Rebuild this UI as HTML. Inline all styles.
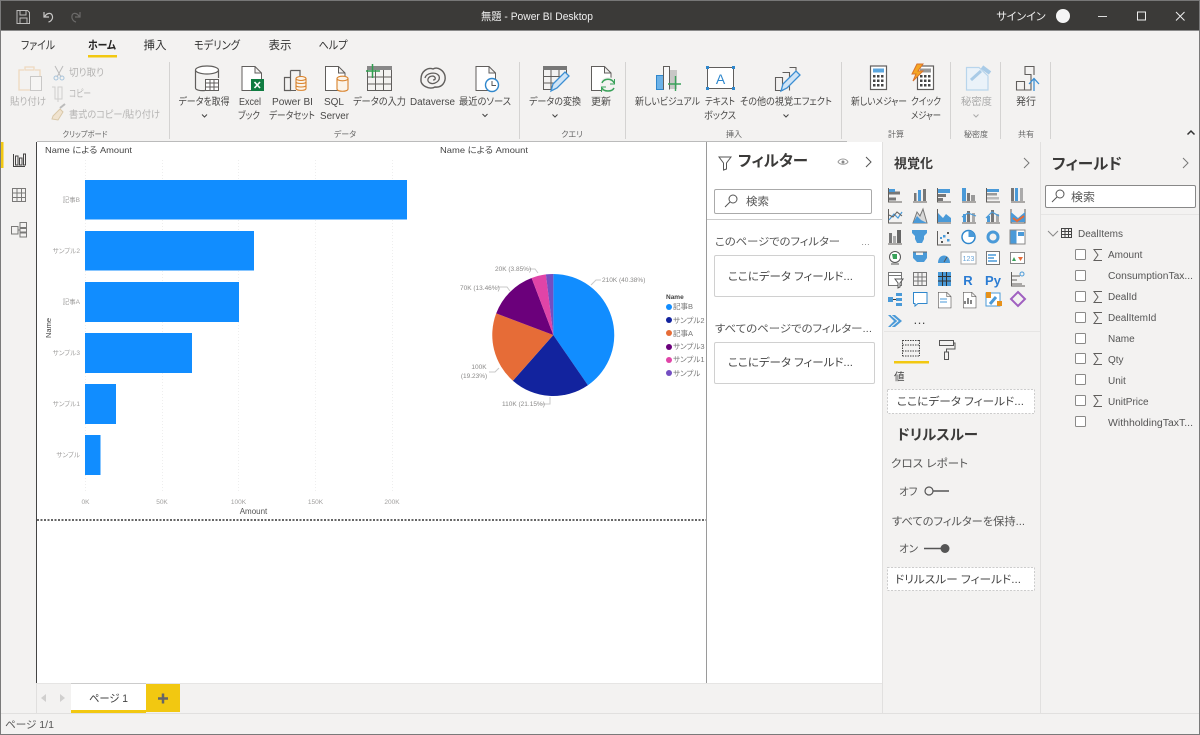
<!DOCTYPE html>
<html lang="ja"><head><meta charset="utf-8"><title>無題 - Power BI Desktop</title>
<style>
html,body{margin:0;padding:0;width:1200px;height:735px;overflow:hidden;background:#f3f2f1}
svg{position:absolute;left:0;top:0;filter:blur(.3px)}
text{font-family:"Liberation Sans","Noto Sans CJK JP",sans-serif;font-feature-settings:"palt";fill:#4a4948;font-size:10px}
.m{text-anchor:middle}
.tab{font-size:11.5px;fill:#333}
.d{fill:#b5b4b3}
.g{font-size:8px;fill:#666}
.ln{fill:none;stroke:#605e5c;stroke-width:1}
.b{fill:#4a9ad8}
.bl{fill:none;stroke:#4a9ad8;stroke-width:1.2}
.a{font-size:6.5px;fill:#a09f9e}
.p{font-size:6px;fill:#8a8988}
.f{font-size:10px;fill:#555}
.h{font-size:15.5px;font-weight:bold;fill:#3b3a39}
</style></head><body>
<svg width="1200" height="735" viewBox="0 0 1200 735">
<defs>
<g id="doc"><path class="ln" d="M0.5 .5H13.500L20 7V24.500H.5Z M13.500 .5V7H20" style="fill:#fff"/></g>
<g id="cb"><rect x=".5" y=".5" width="10" height="10" rx="1" fill="#fff" stroke="#8a8988"/></g>
<g id="sig"><path d="M9 .5H1L5 6 1 11.500H9" fill="none" stroke="#605e5c"/></g>
</defs>

<!-- window -->
<rect x="0" y="0" width="1200" height="735" fill="#f3f2f1"/>
<rect x="0" y="0" width="1200" height="31" fill="#3b3a38"/>
<rect x="0" y="0" width="1200" height="1" fill="#777"/>
<rect x="0" y="30" width="1200" height="1" fill="#8a8a8a"/>
<rect x="0" y="734" width="1200" height="1" fill="#7a7a7a"/>
<rect x="0" y="0" width="1" height="735" fill="#7a7a7a"/>
<rect x="1199" y="0" width="1" height="735" fill="#7a7a7a"/>

<!-- title bar -->
<path d="M17 10.500H27.500L29.500 12.500V23.500H17Z M20 10.500V15H26V10.500 M20 23.500V18H27V23.500" fill="none" stroke="#bdbcbb"/>
<path d="M44 12V17H49 M44.500 17C47 12 53 12 52.500 18 52 20 50.500 21.500 48.500 22" fill="none" stroke="#c8c7c6" stroke-width="1.200"/>
<path d="M80 12V17H75 M79.500 17C77 12 71 12 72 18 72.500 20 74 21.500 76 22" fill="none" stroke="#6b6a69" stroke-width="1.200"/>
<text x="537" y="20" class="m" textLength="112" lengthAdjust="spacingAndGlyphs" style="font-size:11px;fill:#f0f0f0">無題 - Power BI Desktop</text>
<text x="1021" y="20" class="m" style="font-size:11px;fill:#f0f0f0">サインイン</text>
<circle cx="1063" cy="16" r="7" fill="#f5f5f5"/>
<rect x="1098" y="16" width="9" height="1" fill="#ddd"/>
<rect x="1137.500" y="12" width="8" height="8" fill="none" stroke="#eee"/>
<path d="M1176 12L1184.500 20.500M1184.500 12L1176 20.500" stroke="#eee" stroke-width="1"/>

<!-- tabs -->
<text x="38" y="49" class="m tab" textLength="34" lengthAdjust="spacingAndGlyphs">ファイル</text>
<text x="102" y="49" class="m tab" textLength="28" lengthAdjust="spacingAndGlyphs" style="font-weight:bold;fill:#252423">ホーム</text>
<text x="155" y="49" class="m tab" textLength="23" lengthAdjust="spacingAndGlyphs">挿入</text>
<text x="217" y="49" class="m tab" textLength="46" lengthAdjust="spacingAndGlyphs">モデリング</text>
<text x="280" y="49" class="m tab" textLength="23" lengthAdjust="spacingAndGlyphs">表示</text>
<text x="333" y="49" class="m tab" textLength="29" lengthAdjust="spacingAndGlyphs">ヘルプ</text>
<rect x="88" y="55" width="29" height="2.500" fill="#f2c811"/>

<!-- ribbon separators -->
<g fill="#d4d3d2">
<rect x="169" y="62" width="1" height="77"/><rect x="519" y="62" width="1" height="77"/><rect x="625" y="62" width="1" height="77"/>
<rect x="841" y="62" width="1" height="77"/><rect x="950" y="62" width="1" height="77"/><rect x="1000" y="62" width="1" height="77"/><rect x="1050" y="62" width="1" height="77"/>
</g>

<!-- clipboard group -->
<path d="M24 70H19V90H30 M35 70H40V76 M25 70V67H34V70Z" fill="none" stroke="#eed9bf" stroke-width="1.300"/>
<rect x="30.500" y="76.500" width="11" height="14" fill="#f6f5f4" stroke="#c9c8c7"/>
<path d="M55 66L61 77M63 66L57 77" stroke="#bbb" fill="none"/><circle cx="56" cy="78" r="2" fill="none" stroke="#a9c5dc"/><circle cx="62" cy="78" r="2" fill="none" stroke="#a9c5dc"/>
<path d="M52 88H55V100H62V88H58V103" fill="none" stroke="#cfcecd" transform="translate(0 -1)"/>
<path d="M53 116L60 109 63 112 58 120 52 119Z" fill="#f0e3cf" stroke="#d9c8a9"/><path d="M60 108L65 104" stroke="#bbb" stroke-width="2"/>
<text x="28" y="105" class="m d" textLength="36" lengthAdjust="spacingAndGlyphs">貼り付け</text>
<text x="69" y="76" class="d" textLength="35" lengthAdjust="spacingAndGlyphs">切り取り</text>
<text x="69" y="97" class="d" textLength="22" lengthAdjust="spacingAndGlyphs">コピー</text>
<text x="69" y="118" class="d" textLength="91" lengthAdjust="spacingAndGlyphs">書式のコピー/貼り付け</text>
<text x="85" y="137" class="m g" textLength="45" lengthAdjust="spacingAndGlyphs">クリップボード</text>

<!-- get data -->
<path d="M195.500 70V88C195.500 90 200 91 205 90.500" fill="none" stroke="#605e5c" stroke-width="1.200"/>
<path d="M218.500 70V78" stroke="#605e5c" stroke-width="1.200"/>
<ellipse cx="207" cy="70" rx="11.500" ry="4" fill="#fff" stroke="#605e5c" stroke-width="1.200"/>
<g fill="#fff" stroke="#605e5c"><rect x="205.500" y="79.500" width="13" height="11"/><path d="M205.500 83H218.500M205.500 87H218.500M210 79.500V90.500M214 79.500V90.500" fill="none"/></g>
<text x="204" y="105" class="m" textLength="51" lengthAdjust="spacingAndGlyphs">データを取得</text>
<path d="M202 114.500L204.500 117 207 114.500" fill="none" stroke="#444"/>

<!-- excel -->
<use href="#doc" x="241.500" y="66"/>
<rect x="251" y="79" width="13" height="12" fill="#107c41"/>
<path d="M254.500 82L260 88M260 82L254.500 88" stroke="#fff" stroke-width="1.600"/>
<text x="250" y="105" class="m" textLength="22" lengthAdjust="spacingAndGlyphs">Excel</text><text x="249" y="119" class="m" textLength="22" lengthAdjust="spacingAndGlyphs">ブック</text>

<!-- PBI dataset -->
<path d="M290.500 70.500H300V78M290.500 70.500V78M284.500 77.500H290.500V90.500H284.500Z" fill="none" stroke="#605e5c" stroke-width="1.200"/>
<path d="M290.500 90.500H296" stroke="#605e5c"/>
<g fill="#fbf4ea" stroke="#d9822b" stroke-width="1.100"><path d="M296 78.500V88.500C296 91 306 91 306 88.500V78.500"/><ellipse cx="301" cy="78.500" rx="5" ry="2"/><path d="M296 82C296 84 306 84 306 82M296 85.500C296 87.500 306 87.500 306 85.500" fill="none"/></g>
<text x="292.500" y="105" class="m" textLength="41" lengthAdjust="spacingAndGlyphs">Power BI</text><text x="292" y="119" class="m" textLength="46" lengthAdjust="spacingAndGlyphs">データセット</text>

<!-- SQL -->
<use href="#doc" x="325" y="66"/>
<g fill="#fbf4ea" stroke="#d9822b" stroke-width="1.100"><path d="M337 78.500V89C337 92 348 92 348 89V78.500"/><ellipse cx="342.500" cy="78.500" rx="5.500" ry="2.300"/></g>
<text x="334" y="105" class="m">SQL</text><text x="334.500" y="119" class="m" textLength="29" lengthAdjust="spacingAndGlyphs">Server</text>

<!-- enter data -->
<rect x="367" y="66" width="25" height="4" fill="#888"/>
<path d="M367.500 70V90.500H391.500V70M367.500 77H391.500M367.500 84H391.500M375.500 70V90.500M383.500 70V90.500" fill="none" stroke="#605e5c"/>
<path d="M372.500 64V78M366 71H380" stroke="#2f9e4f" stroke-width="1.500"/>
<text x="379.500" y="105" class="m" textLength="53" lengthAdjust="spacingAndGlyphs">データの入力</text>

<!-- dataverse -->
<path d="M421 79C421 71 428 67 433 69 438 66 444 71 445 76 446 82 442 88 435 87 430 90 420 86 421 79Z" fill="none" stroke="#605e5c" stroke-width="1.400"/>
<path d="M425 78C426 73 436 71 439 76 441 81 434 85 430 83 426 81 428 76 433 76 436 77 436 80 433 80" fill="none" stroke="#605e5c" stroke-width="1.300"/>
<text x="432.500" y="105" class="m" textLength="45" lengthAdjust="spacingAndGlyphs">Dataverse</text>

<!-- recent -->
<use href="#doc" x="475.500" y="66"/>
<circle cx="492" cy="85" r="6.500" fill="#fff" stroke="#2f87cc" stroke-width="1.400"/><path d="M492 81V85.500H496" fill="none" stroke="#555"/>
<text x="485" y="105" class="m" textLength="52" lengthAdjust="spacingAndGlyphs">最近のソース</text>
<path d="M482.500 114L485 116.500 487.500 114" fill="none" stroke="#444"/>
<text x="345" y="137" class="m g">データ</text>

<!-- transform -->
<rect x="543" y="66" width="24" height="4" fill="#777"/>
<path d="M543.500 70V89.500H553M566.500 70V76M543.500 76.500H566.500M543.500 83H556M551 70V89.500M559 70V83" fill="none" stroke="#605e5c"/>
<path d="M551 91L553 84 565 72 569 76 557 88Z" fill="#cfe4f6" stroke="#3c8fd3" stroke-width="1.300"/>
<text x="555" y="105" class="m" textLength="52" lengthAdjust="spacingAndGlyphs">データの変換</text>
<path d="M552.500 114.500L555 117 557.500 114.500" fill="none" stroke="#444"/>
<!-- refresh -->
<use href="#doc" x="591" y="66"/>
<circle cx="608" cy="85" r="8" fill="#f3f2f1"/>
<path d="M602 83C604 78 612 78 614 83M614 88C612 92 604 92 602 88" fill="none" stroke="#3aa25a" stroke-width="1.500"/>
<path d="M614.500 79V84H610M601.500 92V87H606" fill="none" stroke="#3aa25a"/>
<text x="601" y="105" class="m" textLength="20" lengthAdjust="spacingAndGlyphs">更新</text>
<text x="572" y="137" class="m g">クエリ</text>

<!-- new visual -->
<rect x="656.500" y="75.500" width="7" height="14" fill="#6cb2e8" stroke="#2f87cc"/>
<path d="M663.500 89.500V66.500H669.500V89.500" fill="#f8f8f8" stroke="#605e5c"/>
<rect x="670" y="70" width="7" height="19" fill="#c8c7c6"/>
<path d="M675.500 76V91M668 84H681" stroke="#3aa25a" stroke-width="1.400"/>
<text x="667.500" y="105" class="m" textLength="65" lengthAdjust="spacingAndGlyphs">新しいビジュアル</text>
<!-- textbox -->
<rect x="707.500" y="67.500" width="26" height="21" fill="#fff" stroke="#605e5c"/>
<g fill="#2f87cc"><rect x="706" y="66" width="3" height="3"/><rect x="732" y="66" width="3" height="3"/><rect x="706" y="87" width="3" height="3"/><rect x="732" y="87" width="3" height="3"/></g>
<text x="720.500" y="84" class="m" style="font-size:14px;fill:#2f87cc">A</text>
<text x="720" y="105" class="m" textLength="30" lengthAdjust="spacingAndGlyphs">テキスト</text><text x="720" y="119" class="m" textLength="32" lengthAdjust="spacingAndGlyphs">ボックス</text>
<!-- more visuals -->
<path d="M775.500 77.500H782.500V90.500H775.500Z M782.500 72.500H789.500V90.500 M789.500 67.500H796V78" fill="none" stroke="#605e5c" stroke-width="1.100"/>
<path d="M781 91L783 84 796 71 800 75 787 88Z" fill="#cfe4f6" stroke="#3c8fd3" stroke-width="1.300"/>
<text x="786" y="105" class="m" textLength="92" lengthAdjust="spacingAndGlyphs">その他の視覚エフェクト</text>
<path d="M783.500 114.500L786 117 788.500 114.500" fill="none" stroke="#444"/>
<text x="734" y="137" class="m g">挿入</text>

<!-- measure -->
<rect x="870.500" y="66" width="16" height="23.500" fill="#fff" stroke="#605e5c" stroke-width="1.200"/>
<rect x="873" y="68.500" width="11" height="4" fill="#5ba6de"/>
<g fill="#444"><rect x="873" y="75" width="2.500" height="2.500"/><rect x="877" y="75" width="2.500" height="2.500"/><rect x="881" y="75" width="2.500" height="2.500"/><rect x="873" y="79.500" width="2.500" height="2.500"/><rect x="877" y="79.500" width="2.500" height="2.500"/><rect x="881" y="79.500" width="2.500" height="2.500"/><rect x="873" y="84" width="2.500" height="2.500"/><rect x="877" y="84" width="2.500" height="2.500"/><rect x="881" y="84" width="2.500" height="2.500"/></g>
<text x="879" y="105" class="m" textLength="56" lengthAdjust="spacingAndGlyphs">新しいメジャー</text>
<!-- quick -->
<rect x="917.500" y="66" width="16" height="23.500" fill="#fff" stroke="#605e5c" stroke-width="1.200"/>
<g fill="#444"><rect x="920" y="75" width="2.500" height="2.500"/><rect x="924" y="75" width="2.500" height="2.500"/><rect x="928" y="75" width="2.500" height="2.500"/><rect x="920" y="79.500" width="2.500" height="2.500"/><rect x="924" y="79.500" width="2.500" height="2.500"/><rect x="928" y="79.500" width="2.500" height="2.500"/><rect x="920" y="84" width="2.500" height="2.500"/><rect x="924" y="84" width="2.500" height="2.500"/><rect x="928" y="84" width="2.500" height="2.500"/></g>
<rect x="920" y="68.500" width="11" height="4" fill="#999"/>
<path d="M917 64L912 74H916L913 81 923 71H918L923 64Z" fill="#f5a623" stroke="#d9722b"/>
<text x="926" y="105" class="m" textLength="30" lengthAdjust="spacingAndGlyphs">クイック</text><text x="926" y="119" class="m" textLength="30" lengthAdjust="spacingAndGlyphs">メジャー</text>
<text x="896" y="137" class="m g">計算</text>

<!-- sensitivity -->
<path d="M966.500 67.500H979L988 76V90H966.500Z" fill="#eaf2f9" stroke="#b8d5ec" stroke-width="1.200"/>
<path d="M971 80L981 71" stroke="#a9cbe7" stroke-width="3"/>
<path d="M982 67L990 73" stroke="#a9cbe7" stroke-width="4"/>
<text x="976.500" y="105" class="m d" textLength="31" lengthAdjust="spacingAndGlyphs" style="fill:#aaa">秘密度</text>
<path d="M973.500 114.500L976 117 978.500 114.500" fill="none" stroke="#aaa"/>
<text x="976" y="137" class="m g">秘密度</text>

<!-- publish -->
<path d="M1016.500 81.500H1024.500V90H1016.500Z M1024.500 74.500H1031V90H1024.500 M1025 74.500V66.500H1034V75" fill="none" stroke="#605e5c" stroke-width="1.100"/>
<path d="M1034 91V79M1029 84L1034 78.500 1039 84" fill="none" stroke="#3c8fd3" stroke-width="1.300"/>
<text x="1026" y="105" class="m" textLength="20" lengthAdjust="spacingAndGlyphs">発行</text>
<text x="1026" y="137" class="m g">共有</text>
<path d="M1187.500 134.500L1191 131 1194.500 134.500" fill="none" stroke="#333" stroke-width="1.500"/>

<!-- left nav -->
<rect x="1" y="142" width="2.500" height="26" fill="#f2c811"/>
<path d="M13.500 154V166.500H25 M15.500 156H18V165H15.500Z M19.500 158H22V165H19.500Z M23.500 154H25.500V165H23.500Z" fill="none" stroke="#444"/>
<path d="M12.500 188.500H25.500V201.500H12.500Z M12.500 193H25.500M12.500 197.500H25.500M17 188.500V201.500M21.500 188.500V201.500" fill="none" stroke="#7a7978"/>
<path d="M11.500 226.500H18V234H11.500Z M18 230H20M20 222.500H26.500V227.500H20Z M20 228.500H26.500V232H20Z M20 233H26.500V237H20Z" fill="none" stroke="#7a7978"/>

<!-- canvas -->
<rect x="37" y="142" width="670" height="541" fill="#fff"/>
<rect x="36" y="142" width="1" height="541" fill="#444"/>
<rect x="37" y="141" width="810" height="1" fill="#bbb"/>
<rect x="706" y="142" width="1" height="541" fill="#9a9a9a"/>
<text x="45" y="153" textLength="87" lengthAdjust="spacingAndGlyphs" style="font-size:8.500px;fill:#444">Name による Amount</text>
<text x="440" y="153" textLength="88" lengthAdjust="spacingAndGlyphs" style="font-size:8.500px;fill:#444">Name による Amount</text>
<g stroke="#eee" stroke-dasharray="1 2"><path d="M85.500 160V492M162.500 160V492M238.500 160V492M315.500 160V492M392.500 160V492"/></g>
<g fill="#118dff">
<rect x="85" y="180" width="322" height="39.500"/>
<rect x="85" y="231" width="169" height="39.500"/>
<rect x="85" y="282" width="154" height="40"/>
<rect x="85" y="333" width="107" height="40"/>
<rect x="85" y="384" width="31" height="40"/>
<rect x="85" y="435" width="15.500" height="40"/>
</g>
<g text-anchor="end">
<text x="80" y="202" class="a">記事B</text>
<text x="80" y="253" class="a">サンプル2</text>
<text x="80" y="304" class="a">記事A</text>
<text x="80" y="355" class="a">サンプル3</text>
<text x="80" y="406" class="a">サンプル1</text>
<text x="80" y="457" class="a">サンプル</text>
</g>
<text x="85.500" y="504" class="m a">0K</text><text x="162" y="504" class="m a">50K</text><text x="238.500" y="504" class="m a">100K</text><text x="315.500" y="504" class="m a">150K</text><text x="392" y="504" class="m a">200K</text>
<text x="253.500" y="514" class="m" style="font-size:8px;fill:#555">Amount</text>
<text transform="translate(51 328) rotate(-90)" class="m" style="font-size:7.500px;fill:#444">Name</text>
<path d="M37 520H706" stroke="#333" stroke-width="1.500" stroke-dasharray="2 1.500"/>

<!-- pie -->
<path d="M553.300 335V274A61 61 0 0 1 587.900 385.200Z" fill="#118dff"/>
<path d="M553.300 335L587.900 385.200A61 61 0 0 1 512.900 380.700Z" fill="#12239e"/>
<path d="M553.300 335L512.900 380.700A61 61 0 0 1 496.200 313.400Z" fill="#e66c37"/>
<path d="M553.300 335L496.200 313.400A61 61 0 0 1 531.600 278Z" fill="#6b007b"/>
<path d="M553.300 335L531.600 278A61 61 0 0 1 545.900 274.400Z" fill="#e044a7"/>
<path d="M553.300 335L545.900 274.400A61 61 0 0 1 553.300 274Z" fill="#744ec2"/>
<g fill="none" stroke="#c8c8c8"><path d="M591 285L596 280H601"/><path d="M529 269H535L538 273"/><path d="M497 287H507L510 291"/><path d="M489 372H495L499 368"/><path d="M550 397V404H541"/></g>
<text x="602" y="282" class="p" style="font-size:6.500px">210K (40.38%)</text>
<text x="495" y="271" class="p" style="font-size:6.500px">20K (3.85%)</text>
<text x="460" y="290" class="p" style="font-size:6.500px">70K (13.46%)</text>
<text x="479" y="369" class="m p" style="font-size:6.500px">100K</text>
<text x="474" y="378" class="m p" style="font-size:6.500px">(19.23%)</text>
<text x="502" y="406" class="p" style="font-size:6.500px">110K (21.15%)</text>
<text x="666" y="299" style="font-size:6.500px;font-weight:bold;fill:#444">Name</text>
<g>
<circle cx="669" cy="307" r="3" fill="#118dff"/><text x="673" y="309" style="font-size:7.500px;fill:#777">記事B</text>
<circle cx="669" cy="320" r="3" fill="#12239e"/><text x="673" y="323" style="font-size:7.500px;fill:#777">サンプル2</text>
<circle cx="669" cy="333" r="3" fill="#e66c37"/><text x="673" y="336" style="font-size:7.500px;fill:#777">記事A</text>
<circle cx="669" cy="347" r="3" fill="#6b007b"/><text x="673" y="349" style="font-size:7.500px;fill:#777">サンプル3</text>
<circle cx="669" cy="360" r="3" fill="#e044a7"/><text x="673" y="362" style="font-size:7.500px;fill:#777">サンプル1</text>
<circle cx="669" cy="373" r="3" fill="#744ec2"/><text x="673" y="376" style="font-size:7.500px;fill:#777">サンプル</text>
</g>

<!-- page tabs -->
<rect x="37" y="683" width="846" height="1" fill="#e6e5e4"/>
<rect x="36" y="683" width="1" height="30" fill="#e0dfde"/>
<path d="M46 694V702L41 698Z M60 694V702L65 698Z" fill="#d0cfce"/>
<rect x="71" y="683" width="75" height="30" fill="#fff"/>
<rect x="71" y="683" width="75" height="1" fill="#ccc"/>
<rect x="71" y="710" width="75" height="3" fill="#f2c811"/>
<text x="108.500" y="702" class="m" textLength="39" lengthAdjust="spacingAndGlyphs" style="font-size:11px;fill:#444">ページ 1</text>
<rect x="146" y="684" width="34" height="28" fill="#f2c811"/>
<path d="M158 698.500H168M163 693.500V703.500" stroke="#666" stroke-width="2.500"/>
<rect x="1" y="713" width="1198" height="1" fill="#e1e0df"/>
<text x="5" y="728" textLength="49" lengthAdjust="spacingAndGlyphs" style="font-size:10.500px;fill:#555">ページ 1/1</text>

<!-- filter panel -->
<rect x="707" y="142" width="175" height="541" fill="#fff"/>
<rect x="882" y="142" width="1" height="571" fill="#e1e0df"/>
<path d="M719 157H731L726.500 163V169L723.500 170V163Z" fill="none" stroke="#555"/>
<text x="738" y="166" class="h" textLength="70" lengthAdjust="spacingAndGlyphs">フィルター</text>
<path d="M838 162C840 158 846 158 848 162 846 165 840 165 838 162Z" fill="none" stroke="#999"/><circle cx="843" cy="162" r="1.500" fill="#888"/>
<path d="M866 157L871 162 866 167" fill="none" stroke="#555"/>
<rect x="714.500" y="189.500" width="157" height="24" rx="1.500" fill="#fff" stroke="#aaa"/>
<circle cx="733" cy="199" r="4" fill="none" stroke="#555"/><path d="M730 202L725 207" stroke="#555"/>
<text x="746" y="205" class="f" textLength="23" lengthAdjust="spacingAndGlyphs" style="font-size:11px">検索</text>
<rect x="707" y="219" width="175" height="1" fill="#ccc"/>
<text x="715" y="245" textLength="125" lengthAdjust="spacingAndGlyphs" style="font-size:10.500px;fill:#555">このページでのフィルター</text>
<text x="861" y="245" style="font-size:9px;fill:#888">…</text>
<rect x="714.500" y="255.500" width="160" height="41" rx="1.500" fill="#fff" stroke="#d0d0d0"/>
<text x="728" y="280" textLength="125" lengthAdjust="spacingAndGlyphs" style="font-size:11px;fill:#444">ここにデータ フィールド...</text>
<text x="715" y="332" textLength="157" lengthAdjust="spacingAndGlyphs" style="font-size:10.500px;fill:#555">すべてのページでのフィルター...</text>
<rect x="714.500" y="342.500" width="160" height="41" rx="1.500" fill="#fff" stroke="#d0d0d0"/>
<text x="728" y="366" textLength="125" lengthAdjust="spacingAndGlyphs" style="font-size:11px;fill:#444">ここにデータ フィールド...</text>

<!-- viz panel -->
<rect x="1040" y="142" width="1" height="571" fill="#e1e0df"/>
<text x="894" y="168" class="h" style="font-size:13px">視覚化</text>
<path d="M1024 158L1029 163 1024 168" fill="none" stroke="#777"/>

<g id="vz">
<!-- row1 -->
<g class="ln"><path d="M888.500 188V202H902"/><path d="M889 193H900M889 199H896" stroke="#777" stroke-width="3"/></g><rect x="889" y="189" width="6" height="3" class="b"/>
<g><path d="M913 202H927" class="ln"/><rect x="914" y="193" width="2.500" height="8" fill="#777"/><rect x="918" y="190" width="3" height="11" class="b"/><rect x="923" y="189" width="3" height="12" fill="#777"/></g>
<g><path d="M937.500 188V202H951" class="ln"/><rect x="938" y="189" width="12" height="4" class="b"/><rect x="938" y="194" width="8" height="3" fill="#777"/><rect x="938" y="198" width="5" height="3" fill="#777"/></g>
<g><path d="M962 202H976" class="ln"/><rect x="962" y="188" width="4" height="13" class="b"/><rect x="967" y="193" width="3" height="8" fill="#777"/><rect x="971" y="195" width="4" height="6" fill="#999"/></g>
<g><path d="M986.500 188V202H1000" class="ln"/><rect x="987" y="189" width="12" height="3" class="b"/><rect x="987" y="193" width="10" height="2.500" fill="#999"/><rect x="987" y="197" width="12" height="2.500" fill="#bbb"/></g>
<g><path d="M1011 202H1025" class="ln"/><rect x="1011" y="188" width="3" height="13" fill="#777"/><rect x="1015" y="188" width="3" height="13" class="b"/><rect x="1020" y="188" width="3" height="13" fill="#aaa"/></g>
<!-- row2 -->
<path d="M888.500 209V223H902" class="ln"/><path d="M889 220L894 214 898 218 902 212" class="bl"/><path d="M889 215L893 217 897 212 902 216" class="ln"/>
<path d="M913 223L917 212 920 216 923 209 927 223Z" fill="#d8d8d8" stroke="#777"/><path d="M913 223L917 216 921 220 927 223Z" class="b"/>
<path d="M937.500 209V223H951" class="ln"/><path d="M938 213L943 218 946 214 951 218V222H938Z" class="b"/>
<path d="M962 223H976" class="ln"/><rect x="963" y="214" width="3" height="8" class="b"/><rect x="967" y="211" width="3" height="11" fill="#777"/><rect x="972" y="213" width="3" height="9" fill="#aaa"/><path d="M962 217L968 213 976 216" class="bl"/>
<path d="M986 223H1000" class="ln"/><rect x="987" y="216" width="3" height="6" class="b"/><rect x="991" y="210" width="3" height="12" fill="#777"/><rect x="996" y="214" width="3" height="8" fill="#aaa"/><path d="M986 218L992 212 999 216" class="bl"/>
<path d="M1011 209V223H1025V209" class="ln"/><path d="M1011 212L1018 218 1025 212V222H1011Z" class="b"/><path d="M1013 218L1017 221 1024 216" stroke="#e66c37" stroke-width="2" fill="none"/>
<!-- row3 -->
<path d="M888 244H902" class="ln"/><rect x="889" y="233" width="3" height="10" fill="#777"/><rect x="893" y="236" width="3" height="7" fill="#aaa"/><rect x="897" y="230" width="4" height="13" fill="#666"/>
<path d="M912 230H927V233L924 236V239L922 243H917L915 239V236L912 233Z" class="b"/>
<path d="M937.500 231V245H951" class="ln"/><g fill="#555"><rect x="947" y="232" width="2" height="2"/><rect x="941" y="241" width="2" height="2"/></g><g class="b"><rect x="943" y="235" width="2.500" height="2.500"/><rect x="947" y="239" width="2.500" height="2.500"/><rect x="940" y="237" width="2" height="2"/></g>
<circle cx="968.500" cy="237" r="6.500" fill="#fff" stroke="#2f87cc" stroke-width="1.500"/><path d="M968.500 230.500A6.500 6.500 0 0 1 975 237H968.500Z" class="b"/>
<circle cx="993" cy="237" r="5" fill="none" stroke="#4a9ad8" stroke-width="3"/>
<rect x="1010" y="230" width="15" height="14" fill="#fff" stroke="#888"/><rect x="1010.500" y="230.500" width="6" height="13" class="b"/><rect x="1018" y="232" width="6" height="4" class="b"/>
<!-- row4 -->
<circle cx="895" cy="257" r="5.500" fill="#fff" stroke="#555"/><path d="M892 254H897V259H893Z" fill="#3aa25a"/><path d="M891 264H899" stroke="#555"/>
<path d="M913 252H916V255H923V252H927V258L924 262H917L913 258Z" class="b"/><path d="M913 252H927" stroke="#666"/>
<path d="M938 263C938 253 950 253 950 263Z" class="b"/><path d="M944 262L947 257" stroke="#555"/>
<rect x="961" y="252" width="15" height="12" fill="#fff" stroke="#aaa"/><text x="968.500" y="261" class="m" style="font-size:7px;fill:#6aa5d8">123</text>
<rect x="986.500" y="251.500" width="13" height="13" fill="#fff" stroke="#777"/><path d="M988 255H996M988 258H994M988 261H997" stroke="#4a9ad8" stroke-width="1.500"/>
<rect x="1010.500" y="252.500" width="14" height="11" fill="#fff" stroke="#888"/><path d="M1012 261L1014 257 1016 261Z" fill="#3aa25a"/><path d="M1018 257H1023L1020.500 261Z" fill="#e66c37"/>
<!-- row5 -->
<rect x="888.500" y="272.500" width="13" height="13" fill="#fff" stroke="#777"/><path d="M888.500 275.500H901.500" stroke="#777"/><path d="M895 279H903L900 283V287L898 288V283Z" fill="#fff" stroke="#555"/>
<path d="M913.500 272.500H926.500V285.500H913.500Z M913.500 277H926.500M913.500 281H926.500M918 272.500V285.500M922 272.500V285.500" fill="none" stroke="#777"/>
<rect x="938" y="272" width="13" height="14" fill="#4a9ad8"/><path d="M938 276.500H951M938 281H951M942.500 272V286M946.500 272V286" stroke="#333"/>
<text x="968" y="285" class="m" style="font-size:13px;font-weight:bold;fill:#2b7cd3">R</text>
<text x="993" y="285" class="m" style="font-size:13px;font-weight:bold;fill:#2b7cd3">Py</text>
<path d="M1011.500 272V286H1025M1012 276H1020M1012 280H1017M1012 284H1022" class="ln"/><circle cx="1022" cy="274" r="2" fill="none" stroke="#4a9ad8"/>
<!-- row6 -->
<g class="b"><rect x="888" y="297" width="5" height="5"/><rect x="896" y="293" width="6" height="3"/><rect x="896" y="298" width="6" height="3"/><rect x="896" y="303" width="6" height="3"/></g><path d="M893 299.500H896" stroke="#333"/>
<path d="M913.500 292.500H927V303.500H918L915 306V303.500H913.500Z" fill="#fff" stroke="#2f87cc"/>
<use href="#doc" transform="translate(938 292) scale(.65)"/><path d="M940 299H947M940 302H947" stroke="#4a9ad8"/>
<use href="#doc" transform="translate(963 292) scale(.65)"/><path d="M965 304V301M968 304V298M971 304V300" stroke="#444" stroke-width="1.300"/>
<path d="M986 293H1000V306H986Z" fill="#fff" stroke="#4a9ad8"/><rect x="986" y="292" width="5" height="6" fill="#e6911a"/><path d="M990 304L996 297" stroke="#4a9ad8" stroke-width="3"/><rect x="997" y="301" width="5" height="5" fill="#e6911a"/>
<path d="M1018 292L1025 299 1018 306 1011 299Z" fill="none" stroke="#a060c0" stroke-width="2"/><circle cx="1018" cy="299" r="2" fill="#f3f2f1"/>
<!-- row7 -->
<path d="M888 315H895L902 321 895 327H888L894 321Z" class="b"/><path d="M891 315L898 321 891 327" stroke="#f3f2f1" fill="none"/>
<text x="919.500" y="324" class="m" style="font-size:13px;fill:#444">…</text>
</g>
<rect x="884" y="331" width="156" height="1" fill="#e6e5e4"/>
<path d="M902.500 340.500H919.500M902.500 345H919.500M902.500 351H919.500M902.500 356H919.500M902.500 340V356M919.500 340V356" fill="none" stroke="#444" stroke-dasharray="1.500 1"/>
<rect x="894" y="361" width="35" height="2.500" fill="#f2c811"/>
<path d="M939.500 340.500H953.500V345.500H939.500Z" fill="#f3f2f1" stroke="#555"/><path d="M953.500 343H955V349H946.500V352" fill="none" stroke="#555"/><rect x="944.500" y="352" width="4" height="7.500" fill="none" stroke="#555"/>
<text x="894" y="380" style="font-size:10.500px;fill:#444">値</text>
<rect x="887.500" y="389.500" width="147" height="24" fill="#fff" stroke="#ccc" stroke-dasharray="2 1.500"/>
<text x="897" y="405" textLength="127" lengthAdjust="spacingAndGlyphs" style="font-size:11px;fill:#444">ここにデータ フィールド...</text>
<text x="897" y="440" textLength="81" lengthAdjust="spacingAndGlyphs" style="font-size:14.500px;font-weight:bold;fill:#3b3a39">ドリルスルー</text>
<text x="891" y="467" textLength="77" lengthAdjust="spacingAndGlyphs" style="font-size:11px;fill:#555">クロス レポート</text>
<text x="899" y="495" style="font-size:10.500px;fill:#555">オフ</text>
<circle cx="929" cy="491" r="4" fill="none" stroke="#555" stroke-width="1.200"/><path d="M933 491H949" stroke="#555" stroke-width="1.500"/>
<text x="892" y="525" textLength="133" lengthAdjust="spacingAndGlyphs" style="font-size:11px;fill:#555">すべてのフィルターを保持...</text>
<text x="899" y="552" style="font-size:10.500px;fill:#555">オン</text>
<path d="M924 548.500H941" stroke="#555" stroke-width="1.500"/><circle cx="945" cy="548.500" r="4.500" fill="#555"/>
<rect x="887.500" y="567.500" width="147" height="23" fill="#fff" stroke="#ccc" stroke-dasharray="2 1.500"/>
<text x="895" y="583" textLength="126" lengthAdjust="spacingAndGlyphs" style="font-size:11px;fill:#444">ドリルスルー フィールド...</text>

<!-- fields panel -->
<text x="1052" y="169" class="h" textLength="70" lengthAdjust="spacingAndGlyphs">フィールド</text>
<path d="M1183 158L1188 163 1183 168" fill="none" stroke="#777"/>
<rect x="1045.500" y="185.500" width="150" height="22" rx="1.500" fill="#fff" stroke="#888"/>
<circle cx="1060" cy="194" r="4" fill="none" stroke="#555"/><path d="M1057 197L1052 202" stroke="#555"/>
<text x="1071" y="201" class="f" textLength="24" lengthAdjust="spacingAndGlyphs" style="font-size:11.500px">検索</text>
<rect x="1041" y="214" width="158" height="1" fill="#e6e5e4"/>
<path d="M1048 231L1053 236 1058 231" fill="none" stroke="#888"/>
<path d="M1061.500 228.500H1071.500V237.500H1061.500Z M1061.500 231.500H1071.500M1061.500 234.500H1071.500M1065 228.500V237.500M1068.500 228.500V237.500" fill="none" stroke="#444"/>
<text x="1078" y="237" class="f">DealItems</text>
<use href="#cb" x="1075" y="249"/><use href="#sig" x="1093" y="249"/><text x="1108" y="258" class="f">Amount</text>
<use href="#cb" x="1075" y="270"/><text x="1108" y="279" class="f" textLength="85" lengthAdjust="spacingAndGlyphs">ConsumptionTax...</text>
<use href="#cb" x="1075" y="291"/><use href="#sig" x="1093" y="291"/><text x="1108" y="300" class="f">DealId</text>
<use href="#cb" x="1075" y="312"/><use href="#sig" x="1093" y="312"/><text x="1108" y="321" class="f">DealItemId</text>
<use href="#cb" x="1075" y="333"/><text x="1108" y="342" class="f">Name</text>
<use href="#cb" x="1075" y="353"/><use href="#sig" x="1093" y="353"/><text x="1108" y="363" class="f">Qty</text>
<use href="#cb" x="1075" y="374"/><text x="1108" y="384" class="f">Unit</text>
<use href="#cb" x="1075" y="395"/><use href="#sig" x="1093" y="395"/><text x="1108" y="405" class="f">UnitPrice</text>
<use href="#cb" x="1075" y="416"/><text x="1108" y="426" class="f" textLength="85" lengthAdjust="spacingAndGlyphs">WithholdingTaxT...</text>
</svg>
</body></html>
